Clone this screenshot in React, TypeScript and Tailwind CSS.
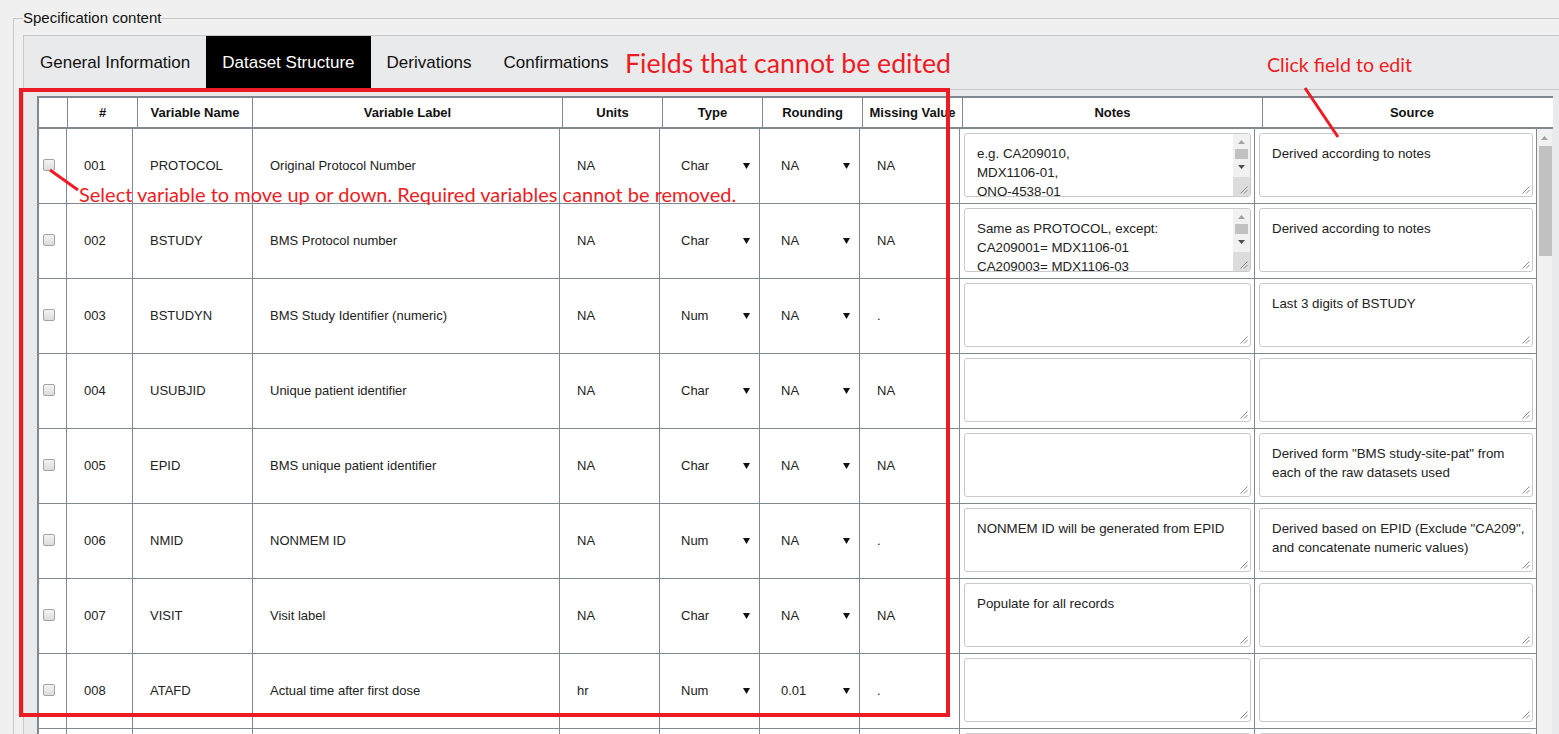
import React from "react";

type Row = {
  n: string;
  name: string;
  label: string;
  units: string;
  type: string;
  round: string;
  miss: string;
  notes?: string;
  notesScroll?: boolean;
  source?: string;
};

const rows: Row[] = [
  { n: "001", name: "PROTOCOL", label: "Original Protocol Number", units: "NA", type: "Char", round: "NA", miss: "NA", notes: "e.g. CA209010,\nMDX1106-01,\nONO-4538-01", notesScroll: true, source: "Derived according to notes" },
  { n: "002", name: "BSTUDY", label: "BMS Protocol number", units: "NA", type: "Char", round: "NA", miss: "NA", notes: "Same as PROTOCOL, except:\nCA209001= MDX1106-01\nCA209003= MDX1106-03", notesScroll: true, source: "Derived according to notes" },
  { n: "003", name: "BSTUDYN", label: "BMS Study Identifier (numeric)", units: "NA", type: "Num", round: "NA", miss: ".", source: "Last 3 digits of BSTUDY" },
  { n: "004", name: "USUBJID", label: "Unique patient identifier", units: "NA", type: "Char", round: "NA", miss: "NA" },
  { n: "005", name: "EPID", label: "BMS unique patient identifier", units: "NA", type: "Char", round: "NA", miss: "NA", source: 'Derived form "BMS study-site-pat" from\neach of the raw datasets used' },
  { n: "006", name: "NMID", label: "NONMEM ID", units: "NA", type: "Num", round: "NA", miss: ".", notes: "NONMEM ID will be generated from EPID", source: 'Derived based on EPID (Exclude "CA209",\nand concatenate numeric values)' },
  { n: "007", name: "VISIT", label: "Visit label", units: "NA", type: "Char", round: "NA", miss: "NA", notes: "Populate for all records" },
  { n: "008", name: "ATAFD", label: "Actual time after first dose", units: "hr", type: "Num", round: "0.01", miss: "." },
];

const headers = ["", "#", "Variable Name", "Variable Label", "Units", "Type", "Rounding", "Missing Value", "Notes", "Source"];

function Grip() {
  return (
    <svg width="9" height="9" viewBox="0 0 9 9" className="block">
      <path d="M8.5 1.5 L1.5 8.5 M8.5 5 L5 8.5" stroke="#8a8a8a" strokeWidth="1" />
    </svg>
  );
}

function Tri({ up, color }: { up?: boolean; color: string }) {
  return (
    <svg width="7" height="4" viewBox="0 0 7 4" className="block">
      <path d={up ? "M0 4 L3.5 0 L7 4 Z" : "M0 0 L7 0 L3.5 4 Z"} fill={color} />
    </svg>
  );
}

// textarea look-alike, scrollbar drawn by hand so it renders the same everywhere
function FakeTextarea({ text, scroll }: { text?: string; scroll?: boolean }) {
  return (
    <div className="relative h-[64px] w-full overflow-hidden rounded-[3px] border border-[#c9c9c9] bg-white pl-[12px] pt-[10px] text-[13.33px] leading-[19px] whitespace-pre text-[#222]">
      {text}
      {scroll ? (
        <div className="absolute top-0 right-0 bottom-0 flex w-[17px] flex-col bg-[#f1f1f1]">
          <div className="flex h-[15px] items-center justify-center">
            <Tri up color="#a3a3a3" />
          </div>
          <div className="mx-[2px] h-[10px] bg-[#c1c1c1]" />
          <div className="flex h-[15px] items-center justify-center">
            <Tri color="#505050" />
          </div>
          <div className="flex-1" />
          <div className="flex h-[19px] items-end justify-end bg-[#dcdcdc] pr-[2px] pb-[2px]">
            <Grip />
          </div>
        </div>
      ) : (
        <div className="absolute right-[2px] bottom-[2px]">
          <Grip />
        </div>
      )}
    </div>
  );
}

function Cell({ children }: { children?: React.ReactNode }) {
  return <div className="flex items-center border-r border-[#808891] pl-[17px]">{children}</div>;
}

function SelectCell({ value }: { value: string }) {
  return (
    <div className="flex items-center justify-between border-r border-[#808891] pr-[9px] pl-[21px]">
      <span>{value}</span>
      <svg width="7" height="6" viewBox="0 0 7 6" className="block">
        <path d="M0 0 L7 0 L3.5 6 Z" fill="#111" />
      </svg>
    </div>
  );
}

function AreaCell({ text, scroll }: { text?: string; scroll?: boolean }) {
  return (
    <div className="border-r border-[#808891] pt-[4px] pr-[3px] pl-[4px]">
      <FakeTextarea text={text} scroll={scroll} />
    </div>
  );
}

function BodyRow({ r }: { r?: Row }) {
  return (
    <div className="grid h-[75px] shrink-0 grid-cols-[28px_66px_120px_307px_100px_100px_100px_100px_295px_282px] border-b border-[#808891] text-[13px] text-[#222]">
      <div className="flex items-center border-r border-[#808891] pl-[4px]">
        {r && (
          <div className="-mt-[2px] h-[12px] w-[12px] rounded-[2px] border border-[#a3a3a3] bg-gradient-to-b from-[#f3f3f3] to-[#dcdcdc]" />
        )}
      </div>
      <Cell>{r?.n}</Cell>
      <Cell>{r?.name}</Cell>
      <Cell>{r?.label}</Cell>
      <Cell>{r?.units}</Cell>
      {r ? <SelectCell value={r.type} /> : <Cell />}
      {r ? <SelectCell value={r.round} /> : <Cell />}
      <Cell>{r?.miss}</Cell>
      <AreaCell text={r?.notes} scroll={r?.notesScroll} />
      <AreaCell text={r?.source} />
    </div>
  );
}

export default function App() {
  return (
    <div className="relative h-[734px] w-[1559px] overflow-hidden bg-[#f0f0f0] pt-[10px] pl-[13px] font-['Liberation_Sans',Arial,sans-serif]">
      <fieldset className="w-[1620px] border border-[#c8c8c8] pt-[9px] pl-[9px]">
        <legend className="text-[15px] leading-[16px] text-[#111]">Specification content</legend>

        <div className="border border-[#c8c8c8] bg-[#e9eaeb] pb-[20px]">
          {/* tabs */}
          <div className="flex h-[54px] border-b border-[#c8c8c8] text-[17px] text-[#111]">
            <div className="flex items-center px-4">General Information</div>
            <div className="flex items-center bg-black px-4 text-white">Dataset Structure</div>
            <div className="flex items-center px-4">Derivations</div>
            <div className="flex items-center px-4">Confirmations</div>
          </div>

          <div className="pt-[6px] pl-[13px]">
            {/* header table, clipped on the right like the page's own */}
            <div className="h-[33px] w-[1516px] overflow-hidden border-y-2 border-l-2 border-[#808891] bg-white">
              <div className="grid h-full w-[1530px] grid-cols-[29px_70px_115px_310px_100px_100px_100px_100px_300px_298px] text-[13px] font-bold text-[#111]">
                {headers.map((h, i) => (
                  <div
                    key={i}
                    className={
                      i < headers.length - 1
                        ? "flex items-center justify-center border-r border-[#808891] whitespace-nowrap"
                        : "flex items-center justify-center whitespace-nowrap"
                    }
                  >
                    {h}
                  </div>
                ))}
              </div>
            </div>

            {/* body + its scrollbar */}
            <div className="flex h-[640px]">
              <div className="flex w-[1500px] flex-col border-l-2 border-[#808891] bg-white">
                {rows.map((r) => (
                  <BodyRow key={r.n} r={r} />
                ))}
                <BodyRow />
              </div>
              <div className="flex w-[15px] flex-col bg-[#f1f1f1]">
                <div className="flex h-[17px] items-center justify-center">
                  <Tri up color="#a3a3a3" />
                </div>
                <div className="ml-[2px] h-[110px] bg-[#c1c1c1]" />
              </div>
            </div>
          </div>
        </div>
      </fieldset>

      {/* screenshot annotations */}
      <div className="pointer-events-none absolute inset-0 font-['Lato',sans-serif] text-[#ed1c24]">
        <div className="absolute top-[88px] left-[19px] h-[629px] w-[931px] border-4 border-[#ed1c24]" />
        <div className="absolute top-[49.5px] left-[625px] text-[26.7px] leading-none whitespace-nowrap">
          Fields that cannot be edited
        </div>
        <div className="absolute top-[55px] left-[1267px] text-[19.6px] leading-none whitespace-nowrap">
          Click field to edit
        </div>
        <div className="absolute top-[183.5px] left-[79px] text-[20px] leading-none whitespace-nowrap">
          Select variable to move up or down. Required variables cannot be removed.
        </div>
        <svg className="absolute inset-0" width="1559" height="734">
          <line x1="50" y1="170" x2="78" y2="190" stroke="#ed1c24" strokeWidth="3" />
          <line x1="1305" y1="88" x2="1338" y2="137" stroke="#ed1c24" strokeWidth="3" />
        </svg>
      </div>
    </div>
  );
}
